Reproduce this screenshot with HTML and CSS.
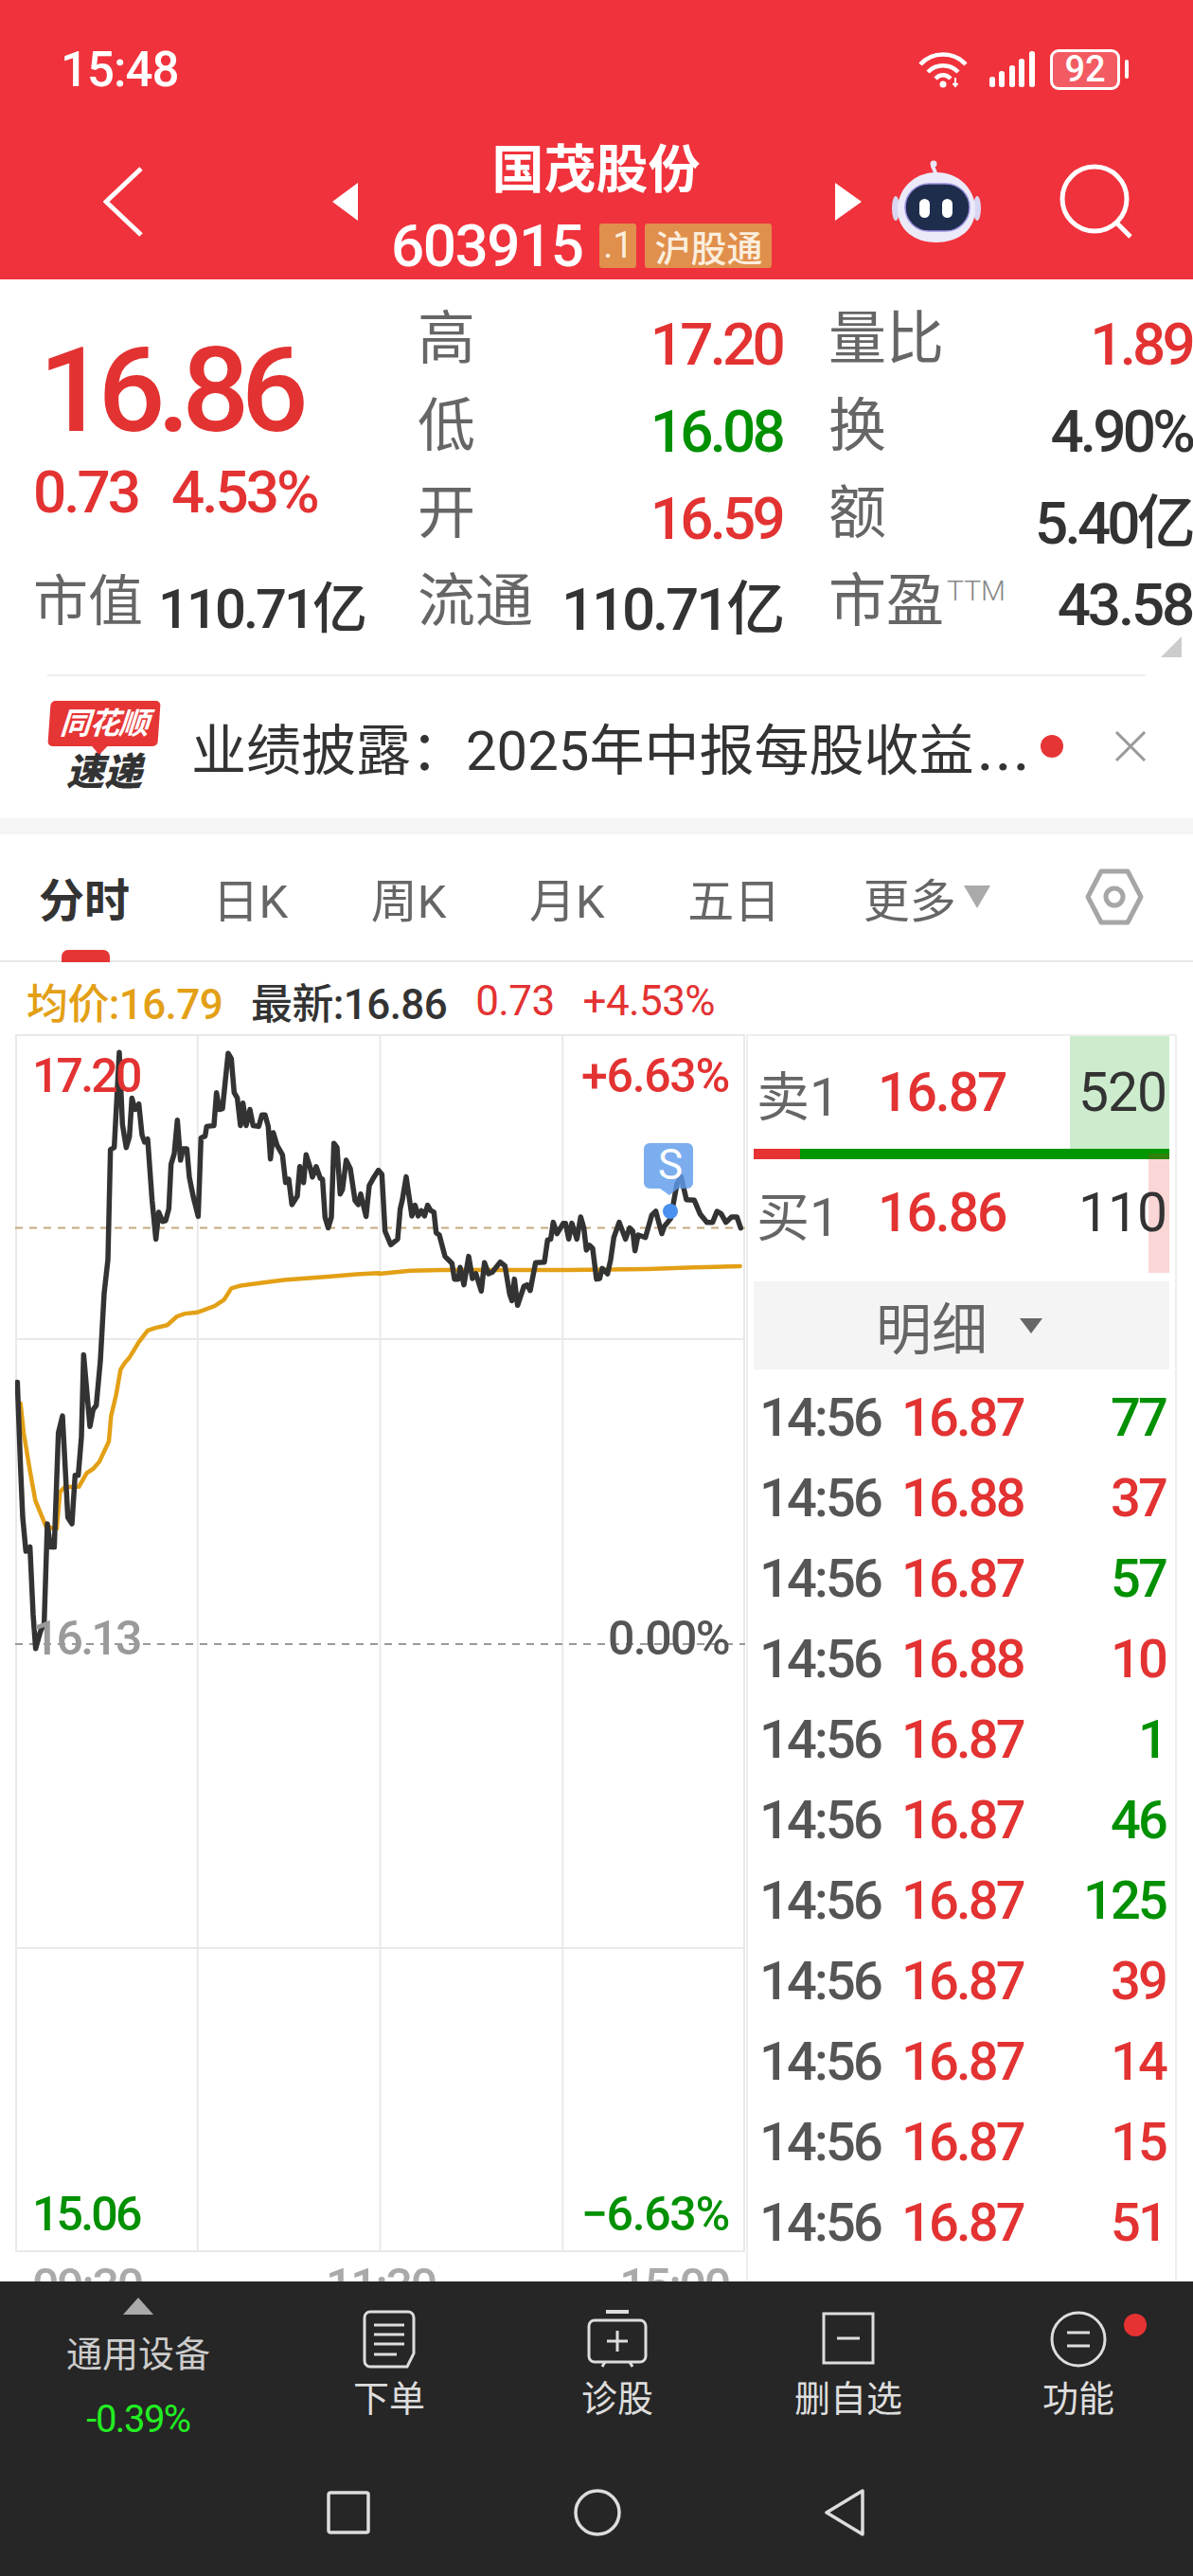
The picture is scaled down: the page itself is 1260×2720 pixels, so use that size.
FILE: index.html

```html
<!DOCTYPE html>
<html lang="zh-CN">
<head>
  <meta charset="UTF-8" />
  <title>国茂股份 603915</title>
  <link rel="stylesheet" href="styles.css">
</head>
<body>
  <div class="app">
    <header class="header">
      <div class="status">
        <span class="clock">15:48</span>
        <div class="status-icons">
          <svg class="wifi" width="52" height="40" viewBox="0 0 52 40" fill="none" stroke="#fff" stroke-width="4.5">
            <path d="M2 15C15 1 37 1 50 15" />
            <path d="M10 23C19 14 33 14 42 23" />
            <path d="M18 30C23 25 29 25 34 30" />
            <circle cx="26" cy="36" r="3.5" fill="#fff" stroke="none" />
            <path d="M39 29v9M36.5 35l2.5 3 2.5-3" stroke-width="2" />
          </svg>
          <svg class="signal" width="48" height="40" viewBox="0 0 48 40" fill="#fff">
            <rect x="0" y="28" width="6" height="11" rx="2.5" />
            <rect x="10" y="22" width="6" height="17" rx="2.5" />
            <rect x="21" y="16" width="6" height="23" rx="2.5" />
            <rect x="31" y="9" width="6" height="30" rx="2.5" />
            <rect x="42" y="1" width="6" height="38" rx="2.5" />
          </svg>
          <div class="battery"><span>92</span></div>
          <div class="battery-nub"></div>
        </div>
      </div>
      <div class="nav">
        <svg class="back" width="42" height="74" viewBox="0 0 42 74" fill="none" stroke="#fff" stroke-width="5">
          <path d="M40 2L3 37l37 35" />
        </svg>
        <div class="step step-left"></div>
        <div class="title-block">
          <div class="stock-name">国茂股份</div>
          <div class="stock-code">
            <span class="code">603915</span>
            <span class="tag tag-dot">.1</span>
            <span class="tag tag-hk">沪股通</span>
          </div>
        </div>
        <div class="step step-right"></div>
        <svg class="robot" width="94" height="88" viewBox="0 0 94 88">
          <path d="M46 15C46 10 42 8 43 4" fill="none" stroke="#e9e6f7" stroke-width="4" stroke-linecap="round" />
          <circle cx="44" cy="4" r="3.5" fill="#e9e6f7" />
          <ellipse cx="4" cy="51" rx="4" ry="13" fill="#d9d6f2" />
          <ellipse cx="90" cy="51" rx="4" ry="13" fill="#d9d6f2" />
          <path d="M47 13C72 13 88 32 88 52C88 74 70 87 47 87C24 87 6 74 6 52C6 32 22 13 47 13z" fill="#eceaf9" />
          <rect x="14" y="25" width="68" height="50" rx="25" fill="#1f2d4d" stroke="#9a8fe0" stroke-width="1.5" />
          <rect x="29" y="41" width="11" height="20" rx="5.5" fill="#fff" />
          <rect x="53" y="41" width="11" height="20" rx="5.5" fill="#fff" />
        </svg>
        <svg class="search" width="80" height="80" viewBox="0 0 80 80" fill="none" stroke="#fff" stroke-width="5">
          <circle cx="37" cy="37" r="34" />
          <path d="M60 62l15 15" />
        </svg>
      </div>
    </header>

    <section class="quote">
      <div class="quote-main">
        <div class="price-block">
          <div class="price">16.86</div>
          <div class="change"><span>0.73</span><span>4.53%</span></div>
        </div>
        <div class="cell"><span class="label">高</span><span class="val red">17.20</span></div>
        <div class="cell"><span class="label">量比</span><span class="val red">1.89</span></div>
        <div class="cell"><span class="label">低</span><span class="val green">16.08</span></div>
        <div class="cell"><span class="label">换</span><span class="val">4.90%</span></div>
        <div class="cell"><span class="label">开</span><span class="val red">16.59</span></div>
        <div class="cell"><span class="label">额</span><span class="val">5.40亿</span></div>
      </div>
      <div class="quote-foot">
        <div class="cell cell-first"><span class="label">市值</span><span class="val">110.71亿</span></div>
        <div class="cell"><span class="label">流通</span><span class="val">110.71亿</span></div>
        <div class="cell"><span class="label">市盈<sup>TTM</sup></span><span class="val">43.58</span></div>
      </div>
      <div class="corner"></div>
    </section>

    <section class="news">
      <div class="news-logo">
        <div class="bubble">同花顺</div>
        <div class="express">速递</div>
      </div>
      <div class="news-text">业绩披露：2025年中报每股收益<span class="dots">...</span></div>
      <span class="news-dot"></span>
      <svg class="news-close" width="34" height="32" viewBox="0 0 34 32" fill="none" stroke="#999" stroke-width="3">
        <path d="M2 1l30 30M32 1L2 31" />
      </svg>
    </section>

    <div class="band"></div>

    <nav class="tabs">
      <span class="tab active">分时</span>
      <span class="tab">日K</span>
      <span class="tab">周K</span>
      <span class="tab">月K</span>
      <span class="tab">五日</span>
      <span class="tab more">更多<i class="more-caret"></i></span>
      <svg class="gear" width="62" height="62" viewBox="0 0 62 62" fill="none" stroke="#a6a6a6" stroke-width="5" stroke-linejoin="round">
        <path d="M17 4h28l14 27-14 27H17L3 31z" />
        <circle cx="31" cy="31" r="9" />
      </svg>
    </nav>

    <div class="legend">
      <span class="avg">均价:16.79</span>
      <span class="last">最新:16.86</span>
      <span class="red">0.73</span>
      <span class="red">+4.53%</span>
    </div>

    <main class="board">
      <div class="chart-col">
        <div class="chart">
          <svg class="plot" width="771" height="1286" viewBox="16 1092 771 1286" fill="none">
            <g stroke="#e9e9e9" stroke-width="2">
              <path d="M16 1093H787M16 1414H787M16 2057H787M16 2377H787" />
              <path d="M17 1092V2378M208.75 1092V2378M401.5 1092V2378M594.25 1092V2378M786 1092V2378" />
            </g>
            <path d="M16 1296.5H787" stroke="#c4a97f" stroke-width="2" stroke-dasharray="8 7" />
            <path d="M16 1736H787" stroke="#999" stroke-width="2" stroke-dasharray="8 7" />
            <g transform="translate(0 1080) scale(.3333 .4464)">
              <polyline class="avg-line" points="65,900 75,970 95,1060 112,1130 145,1190 165,1195 180,1195 190,1110 205,1098 250,1097 275,1065 295,1055 315,1038 345,990 352,930 368,880 382,820 395,805 410,792 440,755 468,728 490,722 530,715 560,695 585,688 625,685 680,670 710,655 733,628 760,622 830,615 900,608 1050,600 1130,595 1200,592" />
            </g>
            <g transform="translate(400 1080) scale(.3333 .3333)">
              <polyline class="avg-line" points="0,795 100,785 200,783 600,783 850,780 1000,775 1145,771" />
            </g>
            <g transform="translate(0 1080) scale(.3333 .4464)">
              <polyline class="price-line" points="55,850 65,1050 72,1170 82,1250 95,1240 105,1400 113,1480 128,1440 140,1420 150,1185 160,1240 172,1240 185,970 198,930 215,1170 228,1185 238,1070 248,1070 258,980 265,785 285,955 295,915 305,905 318,800 330,640 342,560 350,300 362,295 378,70 388,240 400,295 410,270 418,178 428,205 440,192 450,265 458,282 468,275 482,420 494,512 503,448 515,470 525,468 535,440 542,335 552,310 562,230 572,325 580,298 592,298 600,365 612,410 628,458 637,272 650,268 655,245 678,243 686,165 695,205 705,203 723,72 733,85 742,165 752,178 762,243 770,190 780,243 792,205 802,243 820,245 830,218 840,218 850,245 857,322 866,260 878,290 895,312 905,378 915,370 925,430 942,410 950,340 962,378 970,312 982,340 990,365 1002,340 1015,368 1022,370 1030,460 1040,485 1050,460 1058,285 1068,295 1078,405 1085,395 1097,325 1110,345 1125,420 1135,430 1143,405 1160,458 1170,385 1185,365 1198,350" />
            </g>
            <g transform="translate(400 1080) scale(.3333 .3333)">
              <polyline class="price-line" points="0,468 10,480 20,660 38,703 60,685 68,590 75,560 87,488 105,612 115,578 125,612 135,595 145,612 155,578 165,595 175,600 182,665 192,672 210,740 232,762 240,812 252,812 258,775 270,830 285,740 297,810 308,795 325,850 335,760 348,795 360,790 385,758 400,770 415,860 422,880 430,812 440,895 460,835 470,830 480,848 497,760 525,758 535,688 545,685 553,632 565,668 585,635 592,635 602,685 612,635 628,685 640,615 650,650 658,720 668,705 678,715 690,812 700,810 708,778 725,795 735,750 745,680 762,632 782,685 795,650 805,660 812,722 822,672 845,680 865,610 878,597 897,668 905,645 925,620 945,510 958,487 975,560 1000,562 1018,605 1040,632 1058,632 1072,597 1085,605 1100,632 1118,615 1135,615 1147,650" />
            </g>
            <circle cx="708" cy="1279" r="8" fill="#4a90ee" />
            <path d="M690 1207h36a6 6 0 0 1 6 6v36a6 6 0 0 1-6 6h-10l-9 7-10-7h-11a6 6 0 0 1-6-6v-36a6 6 0 0 1 6-6z" fill="#5f9cec" fill-opacity=".82" />
          </svg>
          <span class="s-mark">S</span>
          <span class="axis top-left red">17.20</span>
          <span class="axis top-right red">+6.63%</span>
          <span class="axis mid-left grey">16.13</span>
          <span class="axis mid-right dim">0.00%</span>
          <span class="axis low-left green">15.06</span>
          <span class="axis low-right green">−6.63%</span>
        </div>
        <div class="times"><span>09:30</span><span>11:30</span><span>15:00</span></div>
      </div>

      <aside class="book">
        <div class="level ask">
          <div class="vol vol-ask"></div>
          <span class="side">卖1</span><span class="level-price red">16.87</span><span class="qty">520</span>
        </div>
        <div class="ratio"><div class="ratio-up"></div></div>
        <div class="level bid">
          <div class="vol vol-bid"></div>
          <span class="side">买1</span><span class="level-price red">16.86</span><span class="qty">110</span>
        </div>
        <div class="detail">明细<i class="detail-caret"></i></div>
        <ul class="ticks">
          <li><span class="t">14:56</span><span class="p red">16.87</span><span class="v green">77</span></li>
          <li><span class="t">14:56</span><span class="p red">16.88</span><span class="v red">37</span></li>
          <li><span class="t">14:56</span><span class="p red">16.87</span><span class="v green">57</span></li>
          <li><span class="t">14:56</span><span class="p red">16.88</span><span class="v red">10</span></li>
          <li><span class="t">14:56</span><span class="p red">16.87</span><span class="v green">1</span></li>
          <li><span class="t">14:56</span><span class="p red">16.87</span><span class="v green">46</span></li>
          <li><span class="t">14:56</span><span class="p red">16.87</span><span class="v green">125</span></li>
          <li><span class="t">14:56</span><span class="p red">16.87</span><span class="v red">39</span></li>
          <li><span class="t">14:56</span><span class="p red">16.87</span><span class="v red">14</span></li>
          <li><span class="t">14:56</span><span class="p red">16.87</span><span class="v red">15</span></li>
          <li><span class="t">14:56</span><span class="p red">16.87</span><span class="v red">51</span></li>
        </ul>
      </aside>
    </main>

    <footer class="footer">
      <div class="tools">
        <div class="tool sector">
          <i class="sector-caret"></i>
          <span class="sector-name">通用设备</span>
          <span class="sector-pct">-0.39%</span>
        </div>
        <div class="tool">
          <svg width="56" height="62" viewBox="0 0 56 62" fill="none" stroke="#ddd" stroke-width="3">
            <path d="M8 2h40a6 6 0 0 1 6 6v38l-7 14H8a6 6 0 0 1-6-6V8a6 6 0 0 1 6-6z" />
            <path d="M12 16h32M12 26h32M12 36h32M12 47h24" />
          </svg>
          <span class="tool-name">下单</span>
        </div>
        <div class="tool">
          <svg width="64" height="62" viewBox="0 0 64 62" fill="none" stroke="#ddd" stroke-width="3">
            <path d="M20 2h24" stroke-width="4" />
            <rect x="2" y="11" width="60" height="44" rx="6" />
            <path d="M32 22v22M21 33h22M16 60l3-5M48 60l-3-5" />
          </svg>
          <span class="tool-name">诊股</span>
        </div>
        <div class="tool">
          <svg width="56" height="62" viewBox="0 0 56 62" fill="none" stroke="#ddd" stroke-width="3">
            <rect x="2" y="4" width="52" height="52" />
            <path d="M16 30h24" />
          </svg>
          <span class="tool-name">删自选</span>
        </div>
        <div class="tool tool-dot">
          <svg width="60" height="62" viewBox="0 0 60 62" fill="none" stroke="#ddd" stroke-width="3">
            <circle cx="30" cy="31" r="28" />
            <path d="M18 24h24M18 38h24" />
          </svg>
          <span class="tool-name">功能</span>
          <i class="badge"></i>
        </div>
      </div>
      <div class="sysnav">
        <svg width="46" height="46" viewBox="0 0 46 46" fill="none" stroke="#ddd" stroke-width="3.5">
          <rect x="2" y="2" width="42" height="42" rx="2" />
        </svg>
        <svg width="50" height="50" viewBox="0 0 50 50" fill="none" stroke="#ddd" stroke-width="3.5">
          <circle cx="25" cy="25" r="23" />
        </svg>
        <svg width="42" height="50" viewBox="0 0 42 50" fill="none" stroke="#ddd" stroke-width="3.5" stroke-linejoin="round">
          <path d="M40 2v46L2 25z" />
        </svg>
      </div>
    </footer>
  </div>
</body>
</html>
```

FILE: styles.css

```css
* { box-sizing: border-box; }
html, body { margin: 0; padding: 0; background: #fff; }
body { font-family: Roboto, "Noto Sans CJK SC", sans-serif; color: #333; }
ul { list-style: none; margin: 0; padding: 0; }
i { display: block; }

.app { width: 1260px; height: 2720px; display: flex; flex-direction: column; overflow: hidden; position: relative; }
.red { color: #e33232; }
.green { color: #009000; }
.grey { color: #9a9a9a; }
.dim { color: #555; }

/* header */
.header { height: 295px; background: #f0323c; color: #fff; flex: none; }
.status { height: 146px; display: flex; align-items: center; padding-left: 64px; }
.clock { font-size: 51px; font-weight: 500; letter-spacing: -1px; }
.status-icons { margin-left: auto; margin-right: 68px; display: flex; align-items: center; }
.wifi { margin-right: 23px; }
.signal { margin-right: 16px; }
.battery { width: 74px; height: 43px; border: 3px solid #fff; border-radius: 9px; background: rgba(255,255,255,0.2); display: flex; align-items: center; justify-content: center; font-size: 38px; font-weight: 500; }
.battery-nub { width: 4px; height: 20px; background: #fff; border-radius: 2px; margin-left: 5px; }
.nav { height: 149px; display: flex; align-items: center; padding: 0 0 16px 109px; }
.back { flex: none; }
.step { width: 0; height: 0; border-top: 20px solid transparent; border-bottom: 20px solid transparent; flex: none; }
.step-left { border-right: 27px solid #fff; margin-left: 200px; }
.step-right { border-left: 28px solid #fff; }
.title-block { width: 504px; padding: 5px 0 0 35px; }
.stock-name { font-size: 55px; line-height: 62px; font-weight: 700; text-align: center; padding-right: 36px; }
.stock-code { display: flex; align-items: center; height: 47px; margin-top: 26px; }
.code { font-size: 62px; font-weight: 500; letter-spacing: -1.5px; margin-right: 18px; }
.tag { height: 47px; background: #e08f4c; border-radius: 3px; color: #fbeedd; display: flex; align-items: center; justify-content: center; }
.tag-dot { width: 39px; font-size: 38px; margin-right: 9px; }
.tag-hk { width: 134px; font-size: 38px; font-weight: 500; white-space: nowrap; }
.robot { margin-left: 32px; flex: none; }
.search { margin-left: 83px; flex: none; }

/* quote block */
.quote { height: 417px; position: relative; flex: none; padding-top: 22px; }
.quote-main { display: grid; grid-template-columns: 385px 384px; grid-template-rows: repeat(3, 92px); column-gap: 49px; padding-left: 441px; position: relative; }
.price-block { position: absolute; left: 35px; top: 0; width: 400px; }
.price { font-size: 125px; line-height: 140px; font-weight: 500; color: #e33232; letter-spacing: -8.5px; margin: 26px 0 0 6px; }
.change { font-size: 62px; line-height: 70px; font-weight: 500; color: #e33232; display: flex; gap: 35px; letter-spacing: -3px; margin-top: 2px; }
.cell { display: flex; justify-content: space-between; align-items: center; }
.label { font-size: 61px; line-height: 80px; color: #666; white-space: nowrap; margin-bottom: 10px; }
.val { font-size: 62px; font-weight: 500; letter-spacing: -3.8px; white-space: nowrap; }
.quote-foot { display: grid; grid-template-columns: 357px 385px 384px; column-gap: 49px; padding-left: 35px; height: 88px; }
.quote-foot .label { margin-bottom: 6px; }
.quote-foot .cell-first { gap: 16px; justify-content: flex-start; }
.quote-foot .cell-first .label { font-size: 58px; }
.quote-foot .cell-first .val { font-size: 58px; letter-spacing: -3px; }
.quote-foot .val { font-size: 62px; letter-spacing: -3.2px; }
sup { font-size: 30px; font-weight: 300; color: #888; vertical-align: 22px; line-height: 0; margin-left: 3px; }
.corner { position: absolute; right: 12px; bottom: 18px; width: 0; height: 0; border-left: 22px solid transparent; border-bottom: 22px solid #ccc; }

.news { height: 152px; display: flex; align-items: center; padding-left: 52px; flex: none; position: relative; }
.news::before { content: ""; position: absolute; left: 50px; right: 50px; top: 0; height: 2px; background: #eee; }
.news-logo { width: 116px; flex: none; }
.bubble { height: 48px; background: #e63535; border-radius: 5px; color: #fff; font-size: 32px; font-weight: 700; font-style: italic; text-align: center; line-height: 48px; white-space: nowrap; position: relative; letter-spacing: -1px; transform: skewX(-4deg); }
.bubble::after { content: ""; position: absolute; left: 46px; top: 47px; border-left: 9px solid transparent; border-right: 9px solid transparent; border-top: 10px solid #e63535; }
.express { font-size: 40px; font-weight: 900; font-style: italic; color: #333; text-align: center; line-height: 40px; margin-top: 8px; }
.news-text { font-size: 58px; color: #333; margin-left: 34px; white-space: nowrap; width: 882px; flex: none; }
.dots { letter-spacing: 3px; margin-left: 4px; font-weight: 500; }
.news-dot { width: 24px; height: 24px; border-radius: 50%; background: #e63535; margin-left: 15px; flex: none; }
.news-close { margin-left: 54px; flex: none; }
.band { height: 17px; background: #f5f5f5; flex: none; }

/* tabs */
.tabs { height: 135px; border-bottom: 2px solid #e8e8e8; display: flex; align-items: center; padding: 0 0 1px 41px; gap: 87.5px; flex: none; position: relative; }
.tab { font-size: 49px; color: #666; white-space: nowrap; display: flex; align-items: center; }
.tab.active { font-size: 48px; font-weight: 700; color: #333; position: relative; }
.tab.active::after { content: ""; position: absolute; left: 24px; top: 91px; width: 51px; height: 13px; background: #e63535; border-radius: 7px 7px 0 0; }
.more-caret { width: 0; height: 0; margin-left: 8px; border-left: 14px solid transparent; border-right: 14px solid transparent; border-top: 24px solid #aaa; }
.gear { margin-left: -75px; flex: none; margin-left: 13px; }
.legend { height: 76px; display: flex; align-items: center; padding: 5px 0 0 28px; font-size: 44px; font-weight: 500; letter-spacing: -0.6px; color: #333; flex: none; }
.legend span { margin-right: 30px; white-space: nowrap; }
.legend .avg { color: #e3a016; }
.legend .red { font-weight: 400; }

/* chart and order book */
.board { display: flex; padding-left: 16px; height: 1317px; flex: none; }
.chart-col { width: 772px; flex: none; }
.chart { width: 771px; height: 1286px; position: relative; }
.plot { display: block; }
.price-line { fill: none; stroke: #333; stroke-width: 5.5; vector-effect: non-scaling-stroke; stroke-linejoin: round; stroke-linecap: round; }
.avg-line { fill: none; stroke: #e3a016; stroke-width: 4.5; vector-effect: non-scaling-stroke; stroke-linecap: round; }
.s-mark { position: absolute; left: 668px; top: 114px; width: 48px; text-align: center; font-size: 44px; line-height: 48px; color: #fff; }
.axis { position: absolute; font-size: 50px; line-height: 50px; font-weight: 500; letter-spacing: -2.8px; white-space: nowrap; }
.top-left { left: 18px; top: 19px; }
.top-right { right: 17px; top: 19px; letter-spacing: -1.3px; }
.mid-left { left: 18px; top: 613px; }
.mid-right { right: 17px; top: 613px; letter-spacing: -1.6px; }
.low-left { left: 18px; top: 1221px; }
.low-right { right: 17px; top: 1221px; letter-spacing: -1.3px; }
.times { display: flex; justify-content: space-between; padding: 0 18px 0 18px; font-size: 50px; line-height: 50px; font-weight: 500; color: #aaa; margin-top: 11px; letter-spacing: -2.2px; }

.book { width: 455px; flex: none; border: 2px solid #eee; border-bottom: 0; padding: 0 6px; }
.level { position: relative; display: flex; align-items: center; }
.level > span { position: relative; }
.ask { height: 119px; }
.bid { height: 120px; padding-bottom: 7px; }
.vol { position: absolute; right: 0; width: 105px; top: 0; bottom: 0; }
.vol-ask { background: #cdeccd; }
.vol-bid { width: 22px; top: -6px; background: rgba(230,50,50,0.2); }
.side { font-size: 56px; color: #666; width: 135px; padding-left: 3px; white-space: nowrap; }
.level-price { font-size: 57px; font-weight: 500; letter-spacing: -2px; margin-left: -4px; }
.qty { margin-left: auto; margin-right: 3px; font-size: 57px; letter-spacing: -1px; color: #333; }
.ratio { height: 11px; background: #009600; }
.ratio-up { width: 49px; height: 11px; background: #e63232; }
.detail { height: 93px; margin-top: 9px; background: #f4f4f4; display: flex; align-items: center; padding-left: 129px; font-size: 59px; color: #666; }
.detail-caret { margin-left: 34px; border-left: 12px solid transparent; border-right: 12px solid transparent; border-top: 16px solid #666; }
.ticks { padding: 8px 4px 0 6px; }
.ticks li { height: 85px; display: flex; align-items: center; font-size: 56px; font-weight: 500; letter-spacing: -2.8px; }
.t { color: #555; width: 150px; }
.v { margin-left: auto; }

/* bottom bar */
.footer { height: 311px; background: #262626; flex: none; position: relative; }
.tools { display: grid; grid-template-columns: 292px 238px 244px 244px 242px; height: 199px; }
.tool { display: flex; flex-direction: column; align-items: center; padding-top: 30px; position: relative; color: #ddd; }
.tool-name { font-size: 38px; line-height: 44px; margin-top: 10px; white-space: nowrap; }
.sector { padding-top: 17px; }
.sector-caret { border-left: 16px solid transparent; border-right: 16px solid transparent; border-bottom: 18px solid #aaa; }
.sector-name { font-size: 38px; line-height: 46px; color: #ccc; margin-top: 19px; }
.sector-pct { font-size: 40px; line-height: 46px; color: #22ee22; margin-top: 23px; letter-spacing: -1.5px; }
.badge { position: absolute; left: 169px; top: 34px; width: 24px; height: 24px; border-radius: 50%; background: #e63232; }
.sysnav { display: flex; align-items: center; justify-content: center; gap: 215px; height: 90px; padding-right: 3px; }
```
